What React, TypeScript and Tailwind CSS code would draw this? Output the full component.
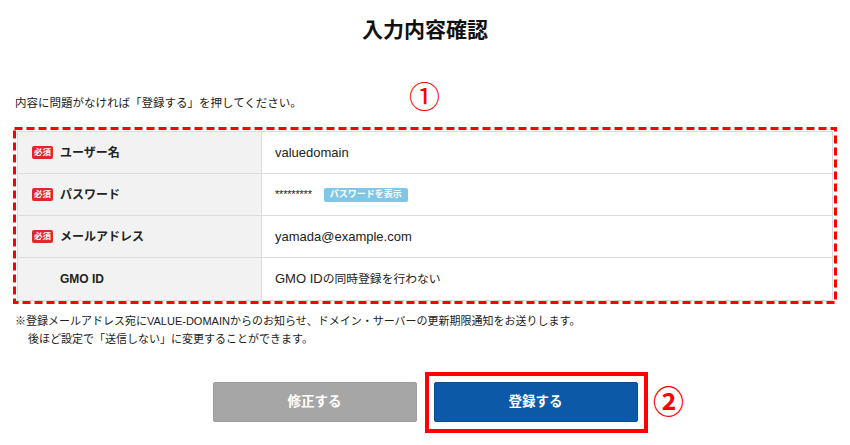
const font = { fontFamily: '"Liberation Sans", "Noto Sans CJK JP", sans-serif' };

interface Row {
  label: string;
  required: boolean;
  value: React.ReactNode;
}

function RequiredBadge() {
  return (
    <span className="flex h-[13px] w-[21px] items-center justify-center rounded-[2px] bg-[#e3262b] text-[8.5px] font-bold leading-none text-white">
      必須
    </span>
  );
}

export default function App() {
  const rows: Row[] = [
    { label: "ユーザー名", required: true, value: "valuedomain" },
    {
      label: "パスワード",
      required: true,
      value: (
        <div className="flex items-center">
          <span className="text-[11px] tracking-[-0.2px]">*********</span>
          <span className="ml-[12px] flex h-[14px] items-center rounded-[2px] bg-[#80c7e7] px-[6px] text-[9px] font-bold leading-none text-white">
            パスワードを表示
          </span>
        </div>
      ),
    },
    { label: "メールアドレス", required: true, value: "yamada@example.com" },
    {
      label: "GMO ID",
      required: false,
      value: (
        <span>
          GMO ID<span className="text-[11.8px]">の同時登録を行わない</span>
        </span>
      ),
    },
  ];

  return (
    <div className="relative h-[445px] w-[850px] overflow-hidden bg-white text-[#222]" style={font}>
      <div className="flex flex-col px-[13px]">
        {/* Heading */}
        <h1 className="pt-[18px] text-center text-[21px] font-bold leading-[24px] text-[#111]">
          入力内容確認
        </h1>

        <p className="mt-[52px] pl-[2px] text-[11.5px] leading-[18px]">
          内容に問題がなければ「登録する」を押してください。
        </p>

        {/* Confirmation table with red dashed annotation */}
        <div className="relative mt-[15px] p-[4px] pb-[3px]">
          <svg className="pointer-events-none absolute inset-0 h-full w-full" preserveAspectRatio="none">
            <rect
              x="1.5"
              y="1.5"
              width="calc(100% - 3px)"
              height="calc(100% - 3px)"
              fill="none"
              stroke="#ff0000"
              strokeWidth="3"
              strokeDasharray="8 4"
            />
          </svg>
          <div className="border border-[#dcdcdc]">
            {rows.map((row, i) => (
              <div
                key={row.label}
                className={`flex h-[42px] ${i < rows.length - 1 ? "border-b border-[#dcdcdc]" : ""}`}
              >
                <div className="flex w-[244px] shrink-0 items-center gap-[7px] border-r border-[#dcdcdc] bg-[#f2f2f2] pl-[14px]">
                  {row.required ? <RequiredBadge /> : <span className="w-[21px]" />}
                  <span className="text-[12px] font-bold">{row.label}</span>
                </div>
                <div className="flex flex-1 items-center pl-[13px] text-[13px]">{row.value}</div>
              </div>
            ))}
          </div>
        </div>

        <div className="mt-[8px] pl-[2px] text-[11px] leading-[18px]">
          <p>※登録メールアドレス宛にVALUE-DOMAINからのお知らせ、ドメイン・サーバーの更新期限通知をお送りします。</p>
          <p className="pl-[13px]">後ほど設定で「送信しない」に変更することができます。</p>
        </div>

        {/* Buttons */}
        <div className="mt-[34px] flex justify-center gap-[17px]">
          <button className="h-[40px] w-[204px] rounded-[2px] border border-[#9c9c9c] bg-[#a6a6a6] text-[13.5px] font-bold text-white">
            修正する
          </button>
          <div className="relative">
            <button className="h-[40px] w-[204px] rounded-[2px] border border-[#0a4c8e] bg-[#0c5aa7] text-[13.5px] font-bold text-white">
              登録する
            </button>
            <div className="pointer-events-none absolute -bottom-[11px] -left-[9px] -right-[10px] -top-[10px] border-[4px] border-[#ff0000]" />
          </div>
        </div>
      </div>

      {/* Annotation numbers */}
      <span className="absolute left-[409px] top-[82px] text-[31px] leading-none text-[#f00]">①</span>
      <span className="absolute left-[653px] top-[387px] text-[31px] font-bold leading-none text-[#f00]">②</span>
    </div>
  );
}
